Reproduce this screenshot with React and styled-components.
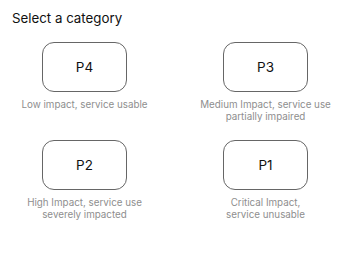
import React from "react"
import styled, { createGlobalStyle } from "styled-components"

const GlobalStyle = createGlobalStyle`
  body {
    margin: 0;
    background: #fff;
    font-family: Inter, "Noto Sans", sans-serif;
  }
`

const Page = styled.div`
  width: 350px;
  height: 270px;
  padding-top: 9px;
  box-sizing: border-box;
`

const Title = styled.h1`
  margin: 0 0 15px 12px;
  font-size: 13.3px;
  line-height: 18px;
  font-weight: 400;
  color: #111;
`

const Grid = styled.div`
  display: grid;
  grid-template-columns: 1fr 1fr;
  column-gap: 20px;
  row-gap: 17px;
  padding: 0 4px;
`

const Option = styled.div`
  display: flex;
  flex-direction: column;
  align-items: center;
`

const Tile = styled.button`
  width: 85px;
  height: 50px;
  border: 1px solid #666;
  border-radius: 12px;
  background: #fff;
  font-family: inherit;
  font-size: 13.5px;
  color: #111;
  cursor: pointer;
  padding: 0;
`

const Caption = styled.div`
  margin-top: 7px;
  font-size: 9.8px;
  line-height: 12px;
  color: #8e8e8e;
  text-align: center;
  white-space: pre-line;
`

const categories = [
  { code: "P4", text: "Low impact, service usable" },
  { code: "P3", text: "Medium Impact, service use\npartially impaired" },
  { code: "P2", text: "High Impact, service use\nseverely impacted" },
  { code: "P1", text: "Critical Impact,\nservice unusable" },
]

export default function App() {
  return (
    <Page>
      <GlobalStyle />
      <Title>Select a category</Title>
      <Grid>
        {categories.map((c) => (
          <Option key={c.code}>
            <Tile>{c.code}</Tile>
            <Caption>{c.text}</Caption>
          </Option>
        ))}
      </Grid>
    </Page>
  )
}
